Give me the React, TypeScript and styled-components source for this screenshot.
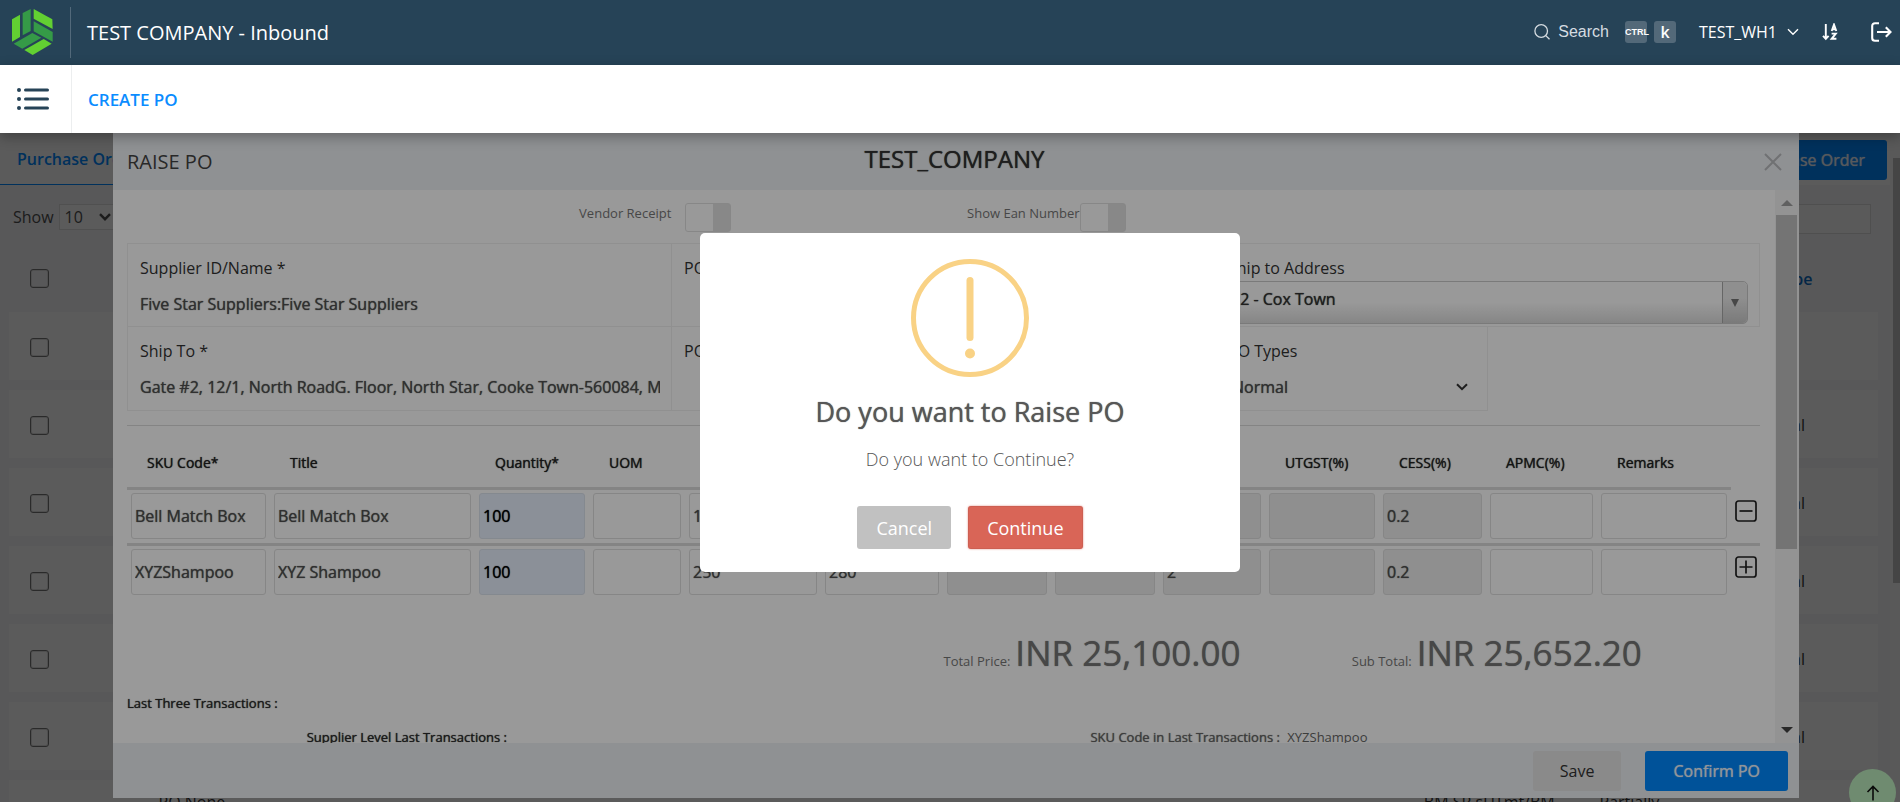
import React from "react";
import styled, { createGlobalStyle } from "styled-components";

const blue = "#0089ff";
const ink = "#505050";
const strong = "0 0 1px currentColor";

const GlobalStyle = createGlobalStyle`
  *, *::before, *::after { box-sizing: border-box; }
  html, body { margin: 0; padding: 0; }
  body {
    font-family: "Open Sans", "Noto Sans", sans-serif;
    font-size: 16px;
    color: ${ink};
    overflow: hidden;
  }
  button, input, select { font: inherit; color: inherit; margin: 0; }
  button { cursor: pointer; border: 0; background: none; padding: 0; }
`;

/* ---------- application frame ---------- */

const Page = styled.div`
  display: flex;
  flex-direction: column;
  height: 100vh;
`;

const TopBar = styled.header`
  display: flex;
  align-items: center;
  flex: none;
  height: 65px;
  padding: 0 8px 0 12px;
  background: #264357;
  color: #fff;
  position: relative;
  z-index: 3;
`;

const Logo = styled.svg`
  width: 41px;
  height: 46px;
  margin-right: 17px;
  margin-bottom: 2px;
`;

const BrandTitle = styled.h1`
  margin: 0 auto 0 0;
  height: 51px;
  padding-left: 16px;
  border-left: 1px solid #52697a;
  font-size: 20px;
  line-height: 51px;
  font-weight: 400;
`;

const TopTools = styled.div`
  display: flex;
  align-items: center;
  height: 44px;
  padding-bottom: 1px;
`;

const SearchButton = styled.button`
  display: flex;
  align-items: center;
  gap: 8px;
  margin-right: 16px;
  color: #d5dce1;
  font-family: "Liberation Sans", sans-serif;
`;

const Key = styled.kbd<{ $narrow?: boolean }>`
  display: grid;
  place-items: center;
  width: 22px;
  height: 22px;
  margin-right: 7px;
  border-radius: 3px;
  background: #536979;
  font-family: ${(p) => (p.$narrow ? '"Liberation Sans Narrow", "Liberation Sans"' : '"Open Sans"')}, sans-serif;
  font-size: ${(p) => (p.$narrow ? "9px" : "16px")};
  font-weight: ${(p) => (p.$narrow ? 700 : 600)};
  line-height: 20px;
`;

const WarehouseButton = styled.button`
  display: flex;
  align-items: center;
  gap: 10px;
  margin: 0 23px 0 16px;
  line-height: 22px;
`;

const IconButton = styled.button`
  display: grid;
  place-items: center;
  & + & { margin-left: 33px; }
`;

const SubBar = styled.nav`
  display: flex;
  align-items: stretch;
  flex: none;
  height: 68px;
  background: #fff;
  box-shadow: 0 4px 12px rgba(0, 0, 0, 0.3);
  position: relative;
  z-index: 3;
`;

const MenuButton = styled.button`
  width: 72px;
  padding: 4px 6px 0 0;
  border-right: 1px solid #eceeef;
`;

const SubLink = styled.a`
  align-self: center;
  padding-left: 16px;
  color: #0a8cff;
  font-size: 17px;
  font-weight: 600;
  text-decoration: none;
`;

const Stage = styled.main`
  position: relative;
  flex: 1;
  min-height: 0;
  overflow: hidden;
`;

/* ---------- purchase order list (behind the form) ---------- */

const ListPage = styled.section`
  display: flex;
  height: 100%;
  background: #f5f5f9;
`;

const ListMain = styled.div`
  flex: 1;
  min-width: 0;
  overflow: hidden;
`;

const TabBar = styled.div`
  display: flex;
  justify-content: space-between;
  height: 52px;
  padding-right: 3px;
  background: #fefefe;
`;

const Tab = styled.a`
  padding: 0 17px;
  border-bottom: 1px solid ${blue};
  color: ${blue};
  font-weight: 600;
  line-height: 52px;
  text-decoration: none;
`;

const PrimaryButton = styled.button`
  height: 40px;
  padding: 0 22px;
  border-radius: 3px;
  background: ${blue};
  color: #f2f8ff;
  text-shadow: ${strong};
`;

const TabAction = styled(PrimaryButton)`
  margin-top: 7px;
`;

const ListTools = styled.div`
  display: flex;
  justify-content: space-between;
  align-items: flex-start;
  height: 60px;
  padding: 19px 19px 0 13px;
`;

const ShowLabel = styled.label`
  display: flex;
  align-items: center;
  gap: 5px;
`;

const SelectWrap = styled.span<{ $top?: number }>`
  position: relative;
  display: block;
  margin-top: ${(p) => p.$top ?? 0}px;
  & > svg {
    position: absolute;
    right: 8px;
    top: 50%;
    margin-top: -4px;
    pointer-events: none;
  }
`;

const SizeSelect = styled.select`
  appearance: none;
  width: 60px;
  height: 26px;
  padding: 0 5px;
  border: 1px solid #e0e0e0;
  border-radius: 0;
  background: #fdfdfd;
`;

const FilterInput = styled.input`
  width: 260px;
  height: 30px;
  border: 1px solid #dcdcdc;
  background: #fcfcfc;
`;

const ListTable = styled.table`
  width: calc(100% - 21px);
  margin-left: 9px;
  border-collapse: separate;
  border-spacing: 0 10px;
  table-layout: fixed;
  color: #333;
  th {
    height: 47px;
    padding: 0;
    color: #0a6cc4;
    font-weight: 600;
    line-height: 22px;
    text-align: left;
  }
  td {
    height: 68px;
    padding: 2px 0 0;
    background: #fdfdfd;
  }
`;

const OrderRow = styled.tr<{ $tall?: boolean }>`
  td {
    vertical-align: ${(p) => (p.$tall ? "top" : "middle")};
    ${(p) => p.$tall && "height: 140px; padding-top: 11px; white-space: nowrap; line-height: 22px;"}
  }
`;

const Tick = styled.input`
  appearance: none;
  display: block;
  width: 19px;
  height: 19px;
  margin-left: 21px;
  border: 1px solid #767676;
  border-radius: 3px;
  box-shadow: inset 0 0 0 1px #dcdcdc;
`;

const PageScroll = styled.div`
  width: 10px;
  padding: 25px 0 0 3px;
  background: #f8f8f8;
  &::after {
    content: "";
    display: block;
    height: 66%;
    background: #c1c1c1;
  }
`;

const Layer = styled.div<{ $shade?: boolean }>`
  position: absolute;
  inset: 0;
  background: ${(p) => (p.$shade ? "rgba(0, 0, 0, 0.4)" : "none")};
`;

const ToTop = styled.button`
  position: absolute;
  right: 4px;
  top: calc(100% - 33px);
  display: grid;
  place-items: center;
  width: 47px;
  height: 47px;
  border-radius: 50%;
  background: #b9e8bb;
  color: #111;
`;

/* ---------- raise PO form ---------- */

const FormLayer = styled(Layer)`
  display: flex;
  padding: 0 101px 4px 113px;
`;

const Form = styled.form`
  display: flex;
  flex-direction: column;
  flex: 1;
  min-width: 0;
  background: #fff;
`;

const FormHead = styled.header`
  display: grid;
  grid-template-columns: 1fr auto 1fr;
  align-items: center;
  flex: none;
  height: 57px;
  padding: 0 17px 0 14px;
  background: #eff2f5;
  color: #444;
`;

const FormName = styled.h2`
  margin: 0;
  font-size: 20px;
  font-weight: 400;
  line-height: 26px;
`;

const CompanyName = styled.p`
  margin: 0;
  height: 57px;
  color: #333;
  font-size: 24px;
  line-height: 52px;
  text-shadow: ${strong};
`;

const CloseButton = styled.button`
  justify-self: end;
  color: #bbbdc0;
  line-height: 0;
`;

const FormMiddle = styled.div`
  display: flex;
  flex: 1;
  min-height: 0;
`;

const FormBody = styled.div`
  flex: 1;
  min-width: 0;
  padding: 0 15px 0 14px;
  overflow: hidden;
`;

const FormScroll = styled.div`
  display: flex;
  flex-direction: column;
  align-items: center;
  width: 24px;
  padding: 10px 2px 10px 1px;
  background: #f5f5f6;
`;

const Thumb = styled.div`
  width: 21px;
  height: 334px;
  margin: 9px 0 auto;
  background: #c1c1c1;
`;

const SwitchRow = styled.div`
  display: grid;
  grid-template-columns: 4fr 1fr 2fr 5fr;
  align-items: start;
  height: 53px;
  padding-top: 13px;
  color: #777;
  font-size: 13px;
  line-height: 20px;
`;

const SwitchLabel = styled.label`
  text-align: right;
  white-space: nowrap;
`;

const Switch = styled.input<{ $gap: number }>`
  appearance: none;
  width: 46px;
  height: 29px;
  margin: 0 0 0 ${(p) => p.$gap}px;
  border: 1px solid #e2e2e2;
  border-radius: 3px;
  background: linear-gradient(90deg, #fff 27px, #e3e3e3 27px);
`;

const Fields = styled.div`
  display: grid;
  grid-template-columns: repeat(12, 1fr);
  grid-template-rows: 83px 84px;
  border-top: 1px solid #f0f0f0;
  border-left: 1px solid #f0f0f0;
  margin-bottom: 14px;
`;

const Field = styled.div<{ $span?: number }>`
  grid-column: span ${(p) => p.$span ?? 4};
  padding: 13px 11px 0 12px;
  border-right: 1px solid #f0f0f0;
  border-bottom: 1px solid #f0f0f0;
  color: #333;
`;

const FieldLabel = styled.label`
  display: block;
  line-height: 22px;
`;

const FieldInput = styled.input`
  width: 100%;
  height: 34px;
  margin-top: 8px;
  padding: 0;
  border: 0;
  background: none;
  color: ${ink};
  text-shadow: ${strong};
`;

const PlainSelect = styled.select`
  appearance: none;
  display: block;
  width: 100%;
  height: 34px;
  padding: 0 4px;
  border: 0;
  background: none;
  color: ${ink};
  text-shadow: ${strong};
`;

const AddressSelect = styled.select`
  appearance: none;
  display: block;
  width: 100%;
  height: 43px;
  padding: 0 2px 7px;
  border: 1px solid #ccc;
  border-radius: 5px;
  background: linear-gradient(#fff 50%, #e0e0e0);
  color: #333;
  text-shadow: ${strong};
`;

const SelectTrigger = styled.span`
  position: absolute;
  right: 1px;
  top: 1px;
  display: grid;
  place-items: center;
  width: 25px;
  height: 41px;
  border-left: 1px solid #aaa;
  border-radius: 0 5px 5px 0;
  background: linear-gradient(#eee 40%, #ccc);
  color: #777;
  pointer-events: none;
`;

const ItemTable = styled.table`
  width: 100%;
  border-top: 1px solid #ddd;
  border-spacing: 0;
  border-collapse: separate;
  table-layout: fixed;
  th {
    height: 64px;
    padding: 26px 0 13px 20px;
    border-bottom: 3px solid #ddd;
    color: #222;
    font-size: 14px;
    font-weight: 400;
    line-height: 22px;
    text-align: left;
    text-shadow: ${strong};
    white-space: nowrap;
  }
  td {
    padding: 3px 4px 4px;
    vertical-align: top;
  }
  tbody tr:not(:last-child) td { border-bottom: 3px solid #ddd; }
`;

const CellInput = styled.input<{ $tone?: "entry" | "locked" }>`
  display: block;
  width: 100%;
  height: 46px;
  padding: 0 3px;
  border: 1px solid ${(p) => (p.$tone === "entry" ? "#dde4ef" : "#e0e0e0")};
  border-radius: 3px;
  background: ${(p) => (p.$tone === "entry" ? "#e8f0fe" : p.$tone === "locked" ? "#eeeeee" : "#fff")};
  color: ${(p) => (p.$tone === "entry" ? "#000" : ink)};
  text-shadow: ${strong};
`;

const RowButton = styled.button`
  display: block;
  margin-top: 7px;
  color: #222;
  line-height: 0;
`;

const Totals = styled.div`
  display: grid;
  grid-template-columns: 2fr 1fr 1fr;
  height: 48px;
  margin: 30px 0 16px;
  color: #777;
  font-size: 13px;
  line-height: 48px;
`;

const Total = styled.div<{ $first?: boolean }>`
  grid-column: ${(p) => (p.$first ? "2" : "auto")};
  white-space: nowrap;
`;

const Amount = styled.output`
  margin-left: 5px;
  font-size: 35px;
  text-shadow: ${strong};
`;

const Note = styled.p<{ $soft?: boolean }>`
  margin: 0;
  color: ${(p) => (p.$soft ? "#666" : "#2c2c2c")};
  font-size: 13px;
  line-height: 20px;
  text-shadow: ${strong};
  white-space: nowrap;
  span { margin-left: 4px; text-shadow: none; }
`;

const History = styled.div`
  display: grid;
  grid-template-columns: 11% 48% 1fr;
  margin-top: 14px;
  & > :first-child { grid-column: 2; }
`;

const FormFoot = styled.footer`
  display: flex;
  justify-content: flex-end;
  align-items: center;
  gap: 24px;
  flex: none;
  height: 55px;
  padding: 0 11px 0 0;
  background: #eff2f5;
`;

const SaveButton = styled.button`
  height: 40px;
  padding: 0 27px;
  border-radius: 3px;
  background: #e6e6e6;
  color: #333;
`;

const ConfirmButton = styled(PrimaryButton)`
  padding: 0 28px;
`;

/* ---------- confirmation dialog ---------- */

const DialogLayer = styled(Layer)`
  display: flex;
  justify-content: center;
  align-items: flex-start;
  padding: 100px 0 0 40px;
`;

const Dialog = styled.div`
  width: 540px;
  padding: 26px 24px 23px;
  border-radius: 5px;
  background: #fff;
  text-align: center;
`;

const DialogIcon = styled.div`
  display: grid;
  justify-content: center;
`;

const DialogTitle = styled.h2`
  margin: 16px 0;
  color: #575757;
  font-size: 27px;
  line-height: 38px;
  font-weight: 400;
  text-shadow: ${strong};
`;

const DialogText = styled.p`
  margin: 0 0 35px;
  color: #555;
  font-size: 18px;
  font-weight: 300;
  line-height: 24px;
`;

const DialogActions = styled.div`
  display: flex;
  justify-content: center;
  gap: 17px;
`;

const DialogButton = styled.button<{ $main?: boolean }>`
  height: 43px;
  padding: 0 19px;
  border-radius: 3px;
  background: ${(p) => (p.$main ? "#d96557" : "#c1c1c1")};
  box-shadow: ${(p) => (p.$main ? "0 0 2px rgba(217, 101, 87, 0.8), inset 0 0 0 1px rgba(0, 0, 0, 0.05)" : "none")};
  color: #fff;
  font-size: 18px;
`;

/* ---------- icons ---------- */

const BrandMark = () => (
  <Logo viewBox="36 26 123 138" role="img" aria-label="Company logo">
    <g fill="#62d032">
      <path d="M36 57l24-14v67l-24 14z" />
      <path d="M101 26l56 31 1 29-57-31z" />
      <path d="M131 116l24 14-57 34-25-15z" />
    </g>
    <g fill="#359a47">
      <path d="M68 38l24-12v66l-24 13z" />
      <path d="M101 63l57 32v29l-57-31z" />
      <path d="M97 98l27 14-57 33-26-15z" />
    </g>
  </Logo>
);

const SearchIcon = () => (
  <svg width="16" height="16" viewBox="0 0 16 16" fill="none" stroke="currentColor" strokeWidth="1.3">
    <circle cx="7.2" cy="7" r="6.3" />
    <path d="M11.8 11.6l3.7 3.6" />
  </svg>
);

const Chevron = ({ weight = 2 }: { weight?: number }) => (
  <svg width="12" height="8" viewBox="0 0 12 8" fill="none" stroke="currentColor" strokeWidth={weight}>
    <path d="M1 1.2l5 5 5-5" />
  </svg>
);

const SortIcon = () => (
  <svg width="16" height="18" viewBox="0 0 16 18" fill="none" stroke="currentColor" strokeWidth="1.9">
    <path d="M3.8 1v14.5M1 12.8l2.8 3 2.8-3" />
    <path d="M9.7 8L12 1.6 14.3 8M10.3 6.2h3.4M9.6 10.6h4.2l-4.2 5.2h4.8" />
  </svg>
);

const LogoutIcon = () => (
  <svg width="21" height="20" viewBox="0 0 21 20" fill="none" stroke="currentColor" strokeWidth="2.1">
    <path d="M8 1.2H4C2.3 1.2 1.2 2.3 1.2 4v12c0 1.7 1.1 2.8 2.8 2.8h4" />
    <path d="M6 10h13.5M14.8 5.2l4.7 4.8-4.7 4.8" />
  </svg>
);

const MenuIcon = () => (
  <svg width="32" height="22" viewBox="0 0 32 22" stroke="#264357" strokeWidth="3" strokeLinecap="round">
    {[2, 11, 20].map((y) => (
      <g key={y}>
        <circle cx="2" cy={y} r="2" fill="#264357" stroke="none" />
        <path d={`M8.5 ${y}h22`} />
      </g>
    ))}
  </svg>
);

const BoxSign = ({ plus }: { plus?: boolean }) => (
  <svg width="22" height="22" viewBox="0 0 22 22" fill="none" stroke="currentColor" strokeWidth="1.7">
    <rect x="1" y="1" width="20" height="20" rx="2.5" />
    <path d={plus ? "M4.5 11h13M11 4.5v13" : "M4.5 11h13"} />
  </svg>
);

const ArrowHead = ({ down, color }: { down?: boolean; color: string }) => (
  <svg width="12" height="6" viewBox="0 0 12 6" fill={color}>
    <path d={down ? "M0 0h12L6 6z" : "M0 6h12L6 0z"} />
  </svg>
);

const WarningIcon = () => (
  <svg width="118" height="118" viewBox="0 0 118 118" fill="#f9d285" display="block">
    <circle cx="59" cy="59" r="56.5" fill="none" stroke="#f9d285" strokeWidth="5" />
    <rect x="55.5" y="18" width="7" height="64" rx="3.5" />
    <circle cx="59" cy="94.5" r="5" />
  </svg>
);

/* ---------- data ---------- */

const columns: { name: string; width: number; tone?: "entry" | "locked" }[] = [
  { name: "SKU Code*", width: 143 },
  { name: "Title", width: 205 },
  { name: "Quantity*", width: 114, tone: "entry" },
  { name: "UOM", width: 96 },
  { name: "Unit Price*", width: 136 },
  { name: "MRP", width: 122 },
  { name: "SGST(%)", width: 108, tone: "locked" },
  { name: "CGST(%)", width: 108, tone: "locked" },
  { name: "IGST(%)", width: 106, tone: "locked" },
  { name: "UTGST(%)", width: 114, tone: "locked" },
  { name: "CESS(%)", width: 107, tone: "locked" },
  { name: "APMC(%)", width: 111 },
  { name: "Remarks", width: 134 },
];

const items = [
  ["Bell Match Box", "Bell Match Box", "100", "", "1", "2", "", "", "2", "", "0.2", "", ""],
  ["XYZShampoo", "XYZ Shampoo", "100", "", "250", "280", "", "", "2", "", "0.2", "", ""],
];

const orders = [
  ["", "", "", ""],
  ["", "", "", "Normal"],
  ["", "", "", "Normal"],
  ["", "", "", "Normal"],
  ["", "", "", "Normal"],
  ["", "", "", "Normal"],
  ["PO None", "BM SR sUTmt/BM", "Partially", ""],
];

/* ---------- page ---------- */

const OrderList = () => (
  <ListPage>
    <ListMain>
      <TabBar>
        <Tab href="#orders">Purchase Orders</Tab>
        <TabAction type="button">Raise Purchase Order</TabAction>
      </TabBar>
      <ListTools>
        <ShowLabel>
          Show
          <SelectWrap>
            <SizeSelect defaultValue="10">
              <option>10</option>
            </SizeSelect>
            <Chevron weight={2.4} />
          </SelectWrap>
        </ShowLabel>
        <FilterInput aria-label="Filter orders" />
      </ListTools>
      <ListTable>
        <colgroup>
          <col style={{ width: "8%" }} />
          <col />
          <col style={{ width: "9.4%" }} />
          <col style={{ width: "8%" }} />
          <col style={{ width: "6.9%" }} />
        </colgroup>
        <thead>
          <tr>
            <th><Tick type="checkbox" aria-label="Select all orders" /></th>
            <th />
            <th />
            <th />
            <th>PO Type</th>
          </tr>
        </thead>
        <tbody>
          {orders.map((cells, i) => (
            <OrderRow key={i} $tall={i === orders.length - 1}>
              <td>{i < orders.length - 1 && <Tick type="checkbox" aria-label={`Select order ${i + 1}`} />}</td>
              {cells.map((cell, j) => <td key={j}>{cell}</td>)}
            </OrderRow>
          ))}
        </tbody>
      </ListTable>
    </ListMain>
    <PageScroll />
  </ListPage>
);

const RaiseForm = () => (
  <Form onSubmit={(e) => e.preventDefault()}>
    <FormHead>
      <FormName>RAISE PO</FormName>
      <CompanyName>TEST_COMPANY</CompanyName>
      <CloseButton type="button" aria-label="Close">
        <svg width="18" height="18" viewBox="0 0 18 18" stroke="currentColor" strokeWidth="2">
          <path d="M1 1l16 16M17 1L1 17" />
        </svg>
      </CloseButton>
    </FormHead>
    <FormMiddle>
      <FormBody>
        <SwitchRow>
          <SwitchLabel htmlFor="vendor">Vendor Receipt</SwitchLabel>
          <Switch id="vendor" type="checkbox" $gap={14} />
          <SwitchLabel htmlFor="ean">Show Ean Number</SwitchLabel>
          <Switch id="ean" type="checkbox" $gap={0} />
        </SwitchRow>
        <Fields>
          <Field>
            <FieldLabel htmlFor="supplier">Supplier ID/Name *</FieldLabel>
            <FieldInput id="supplier" defaultValue="Five Star Suppliers:Five Star Suppliers" />
          </Field>
          <Field>
            <FieldLabel htmlFor="poname">PO Name</FieldLabel>
            <FieldInput id="poname" />
          </Field>
          <Field>
            <FieldLabel htmlFor="address">Ship to Address</FieldLabel>
            <SelectWrap $top={2}>
              <AddressSelect id="address" defaultValue="12 - Cox Town">
                <option>12 - Cox Town</option>
              </AddressSelect>
              <SelectTrigger>
                <svg width="8" height="8" viewBox="0 0 8 8" fill="currentColor"><path d="M0 0h8L4 8z" /></svg>
              </SelectTrigger>
            </SelectWrap>
          </Field>
          <Field>
            <FieldLabel htmlFor="shipto">Ship To *</FieldLabel>
            <FieldInput id="shipto" defaultValue="Gate #2, 12/1, North RoadG. Floor, North Star, Cooke Town-560084, Mysore" />
          </Field>
          <Field>
            <FieldLabel htmlFor="podate">PO Date</FieldLabel>
            <FieldInput id="podate" />
          </Field>
          <Field $span={2}>
            <FieldLabel htmlFor="potype">PO Types</FieldLabel>
            <SelectWrap $top={8}>
              <PlainSelect id="potype" defaultValue="Normal">
                <option>Normal</option>
              </PlainSelect>
              <Chevron />
            </SelectWrap>
          </Field>
        </Fields>
        <ItemTable>
          <colgroup>
            {columns.map((c) => <col key={c.name} style={{ width: c.width }} />)}
            <col style={{ width: 29 }} />
          </colgroup>
          <thead>
            <tr>{columns.map((c) => <th key={c.name}>{c.name}</th>)}</tr>
          </thead>
          <tbody>
            {items.map((row, i) => (
              <tr key={row[0]}>
                {row.map((value, j) => (
                  <td key={columns[j].name}>
                    <CellInput aria-label={columns[j].name} defaultValue={value} $tone={columns[j].tone} />
                  </td>
                ))}
                <td>
                  <RowButton type="button" aria-label={i === items.length - 1 ? "Add row" : "Remove row"}>
                    <BoxSign plus={i === items.length - 1} />
                  </RowButton>
                </td>
              </tr>
            ))}
          </tbody>
        </ItemTable>
        <Totals>
          <Total $first>Total Price:<Amount>INR 25,100.00</Amount></Total>
          <Total>Sub Total:<Amount>INR 25,652.20</Amount></Total>
        </Totals>
        <Note>Last Three Transactions :</Note>
        <History>
          <Note>Supplier Level Last Transactions :</Note>
          <Note $soft>SKU Code in Last Transactions : <span>XYZShampoo</span></Note>
        </History>
      </FormBody>
      <FormScroll>
        <ArrowHead color="#a0a0a0" />
        <Thumb />
        <ArrowHead down color="#444" />
      </FormScroll>
    </FormMiddle>
    <FormFoot>
      <SaveButton type="button">Save</SaveButton>
      <ConfirmButton type="submit">Confirm PO</ConfirmButton>
    </FormFoot>
  </Form>
);

export default function App() {
  return (
    <Page>
      <GlobalStyle />
      <TopBar>
        <BrandMark />
        <BrandTitle>TEST COMPANY - Inbound</BrandTitle>
        <TopTools>
          <SearchButton type="button"><SearchIcon />Search</SearchButton>
          <Key $narrow>CTRL</Key>
          <Key>k</Key>
          <WarehouseButton type="button">TEST_WH1<Chevron weight={1.4} /></WarehouseButton>
          <IconButton type="button" aria-label="Sort"><SortIcon /></IconButton>
          <IconButton type="button" aria-label="Log out"><LogoutIcon /></IconButton>
        </TopTools>
      </TopBar>
      <SubBar>
        <MenuButton type="button" aria-label="Menu"><MenuIcon /></MenuButton>
        <SubLink href="#create">CREATE PO</SubLink>
      </SubBar>
      <Stage>
        <OrderList />
        <Layer $shade />
        <ToTop type="button" aria-label="Back to top">
          <svg width="14" height="16" viewBox="0 0 14 16" fill="none" stroke="currentColor" strokeWidth="1.6">
            <path d="M7 15.5V1.5M1.5 7L7 1.5 12.5 7" />
          </svg>
        </ToTop>
        <FormLayer><RaiseForm /></FormLayer>
        <Layer $shade />
        <DialogLayer>
          <Dialog role="alertdialog" aria-labelledby="ask-title" aria-describedby="ask-text">
            <DialogIcon><WarningIcon /></DialogIcon>
            <DialogTitle id="ask-title">Do you want to Raise PO</DialogTitle>
            <DialogText id="ask-text">Do you want to Continue?</DialogText>
            <DialogActions>
              <DialogButton type="button">Cancel</DialogButton>
              <DialogButton type="button" $main>Continue</DialogButton>
            </DialogActions>
          </Dialog>
        </DialogLayer>
      </Stage>
    </Page>
  );
}
